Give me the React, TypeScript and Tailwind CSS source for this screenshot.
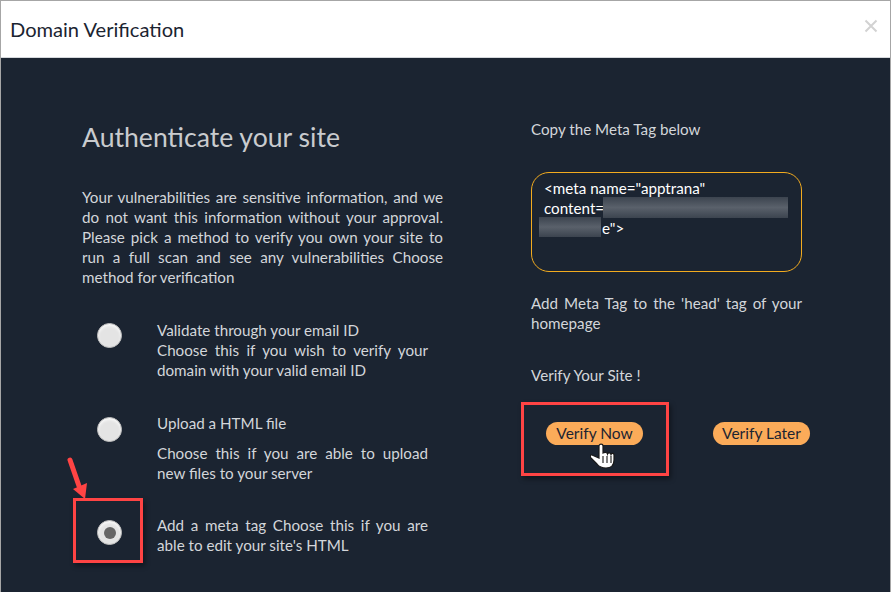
const RadioDot = ({ checked }: { checked?: boolean }) => (
  <div className="w-[25px] h-[25px] rounded-full bg-[#e4e4e4] border border-[#bdbdbd] flex items-center justify-center shrink-0 shadow-[inset_0_2px_3px_rgba(255,255,255,0.8)]">
    {checked && <div className="w-[12px] h-[12px] rounded-full bg-[#666666]" />}
  </div>
);

const Arrow = () => (
  <svg className="absolute left-[61px] top-[455px]" width="30" height="46" viewBox="0 0 30 46">
    <path d="M8 4 L17 30" stroke="#ff4444" strokeWidth="5" strokeLinecap="round" />
    <path d="M11 33 L25 27 L23 43 Z" fill="#ff4444" />
  </svg>
);

const HandCursor = () => (
  <svg className="absolute left-[589px] top-[442px]" width="26" height="26" viewBox="0 0 26 26">
    <path
      d="M9 3 C9 0.500 13 0.500 13 3 L13 10 C14.500 9 17 9 17.500 11 C18 9.500 20.500 9.500 21 11.500 C21.500 10 24 10 24 12 L24 17 C24 22 21 25 16 25 C12 25 9 23.500 7 21 L1 15 C0 14 0 11.500 2 12 L9 15 Z"
      fill="#ffffff"
      stroke="#1a1a1a"
      strokeWidth="1.2"
    />
    <path d="M13 13 V20 M17 13 V20 M21 13 V20" stroke="#1a1a1a" strokeWidth="1.1" />
  </svg>
);

export default function App() {
  return (
    <div
      className="relative w-[891px] h-[592px] overflow-hidden border-t border-x border-[#a6a6a6] bg-[#1b2431] text-[#d3d6da]"
      style={{ fontFamily: '"Lato", "Open Sans", sans-serif' }}
    >
      <header className="h-[57px] bg-white flex items-center justify-between pl-[9px] pr-[12px] border-b border-[#d5d8dc]">
        <h4 className="text-[20.1px] text-[#1b2431]">Domain Verification</h4>
        <svg className="-mt-[6px]" width="14" height="14" viewBox="0 0 14 14">
          <path d="M1.500 1.500 L12.500 12.500 M12.500 1.500 L1.500 12.500" stroke="#d2d2d2" strokeWidth="2" />
        </svg>
      </header>

      <div className="flex">
        <section className="w-[530px] pl-[81px] pr-[88px] pt-[61px]">
          <h2 className="text-[26.6px] leading-[36px] text-[#c9cbce]">Authenticate your site</h2>
          <p className="mt-[32px] text-[15.2px] leading-[20px] text-justify">
            Your vulnerabilities are sensitive information, and we do not want this information without your approval. Please pick a method to verify you own your site to run a full scan and see any vulnerabilities Choose method for verification
          </p>

          <div className="mt-[33px] flex flex-col">
            <div className="flex h-[93px]">
              <div className="w-[75px] pl-[15px] pt-[3px]"><RadioDot /></div>
              <div className="w-[271px] text-[15.2px] leading-[20px] text-justify">
                <div>Validate through your email ID</div>
                <div>Choose this if you wish to verify your domain with your valid email ID</div>
              </div>
            </div>
            <div className="flex h-[102px]">
              <div className="w-[75px] pl-[15px] pt-[4px]"><RadioDot /></div>
              <div className="w-[271px] text-[15.2px] leading-[20px] text-justify">
                <div className="mb-[10px]">Upload a HTML file</div>
                <div>Choose this if you are able to upload new files to your server</div>
              </div>
            </div>
            <div className="flex">
              <div className="w-[75px] pl-[15px] pt-[5px]"><RadioDot checked /></div>
              <div className="w-[271px] text-[15.2px] leading-[20px] text-justify">
                Add a meta tag Choose this if you are able to edit your site's HTML
              </div>
            </div>
          </div>
        </section>

        <section className="flex-1 pt-[61px] text-[15.2px] leading-[20px]">
          <p>Copy the Meta Tag below</p>
          <div className="relative mt-[33px] w-[271px] h-[100px] rounded-[18px] border border-[#f2ab1f] pl-[12px] pt-[5px] text-white">
            <div>&lt;meta name="apptrana"</div>
            <div>content=</div>
            <div className="pl-[58px]">e"&gt;</div>
            <div className="absolute left-[71px] top-[24px] w-[185px] h-[21px] bg-linear-to-b from-[#3c444f] via-[#5a616b] to-[#3c444f]" />
            <div className="absolute left-[7px] top-[44px] w-[62px] h-[20px] bg-linear-to-b from-[#3c444f] via-[#5a616b] to-[#3c444f]" />
          </div>
          <p className="mt-[21px] w-[271px] text-justify">Add Meta Tag to the 'head' tag of your homepage</p>
          <p className="mt-[32px]">Verify Your Site !</p>
          <div className="mt-[37px] ml-[15px] flex gap-[70px]">
            <button className="w-[97px] h-[23px] rounded-full bg-[#fbab59] text-[#1b2431] text-[15.5px] leading-[23px]">Verify Now</button>
            <button className="w-[97px] h-[23px] rounded-full bg-[#fbab59] text-[#1b2431] text-[15.5px] leading-[23px]">Verify Later</button>
          </div>
        </section>
      </div>

      {/* annotations on top of the screenshot */}
      <div className="absolute left-[72px] top-[497px] w-[70px] h-[65px] border-[3px] border-[#ff4444] shadow-[2px_3px_5px_rgba(0,0,0,0.4)]" />
      <div className="absolute left-[520px] top-[401px] w-[148px] h-[74px] border-[3px] border-[#ff4444] shadow-[2px_3px_5px_rgba(0,0,0,0.4)]" />
      <Arrow />
      <HandCursor />
    </div>
  );
}
